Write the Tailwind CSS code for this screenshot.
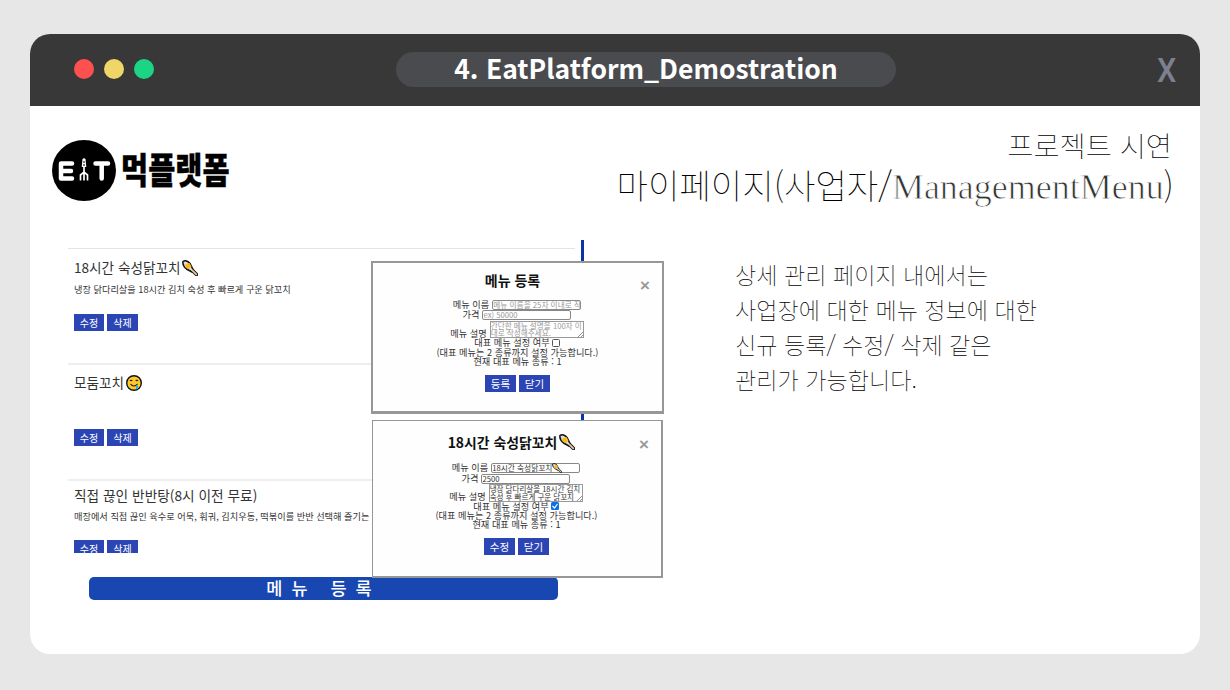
<!DOCTYPE html>
<html lang="ko">
<head>
<meta charset="utf-8">
<title>EatPlatform</title>
<script src="https://cdn.jsdelivr.net/npm/@tailwindcss/browser@4"></script>
</head>
<body class="w-[1230px] h-[690px] overflow-hidden bg-[#e7e7e7] px-[30px] pt-[34px] font-['Noto_Sans_CJK_KR',sans-serif] whitespace-nowrap">
<svg class="hidden">
  <symbol id="skewer" viewBox="0 0 16 16"><path d="M10 10l4.500 4.500" stroke="#111" stroke-width="3.600" stroke-linecap="round"/><path d="M1 1.500C3 0 6 1 8 3.500l3.500 7L10 12 4.500 9C2 7 .5 4 1 1.500z" fill="#d9dcd8" stroke="#111" stroke-width="1.500"/><path d="M3.500 4.500l4-1.500 2 3.500-3 2.500-3-1.500z" fill="#fdb913"/><path d="M10.300 10.300l4 4" stroke="#f3c9a0" stroke-width="1.700" stroke-linecap="round"/></symbol>
</svg>
<main class="w-[1170px] h-[620px] rounded-[20px] overflow-hidden bg-white flex flex-col">
  <header class="h-[72px] shrink-0 bg-[#383838] flex items-center pl-11 pr-[23px]">
    <div class="flex gap-[10px] w-[322px] -mt-0.5">
      <i class="size-5 rounded-full bg-[#ff5050]"></i><i class="size-5 rounded-full bg-[#f0d567]"></i><i class="size-5 rounded-full bg-[#1bd584]"></i>
    </div>
    <h1 class="w-[500px] h-[35px] -mt-0.5 rounded-full bg-[#4a4b4f] text-white text-[26.500px] leading-[31px] font-bold text-center">4. EatPlatform_Demostration</h1>
    <span class="ml-auto text-[#7d8090] font-['Roboto'] font-medium text-[34px] leading-none scale-x-90">X</span>
  </header>
  <div class="flex flex-1">
    <section class="w-[656px] shrink-0 pt-[34px] pl-[22px]">
      <div class="flex h-[61px] items-center">
        <svg class="w-16 h-[61px]" viewBox="0 0 64 61"><ellipse cx="32" cy="30.500" rx="32" ry="30.500"/><g fill="none" stroke="#fff" stroke-width="4.500" stroke-linejoin="round" stroke-linecap="round"><path d="M20 23.500H9V38.500H20M9 31H19M43.500 23.500H56M49.700 23.500V38.500"/></g><path d="M30.500 19q1.500-1.500 3 0l.8 8h-4.600z" fill="#fff"/><path d="M32 27v13.500M28.500 40.500V35l3.500-3 3.500 3v5.500" fill="none" stroke="#fff" stroke-width="1.700"/><path d="M31 22h2M31 25h2" stroke="#000"/></svg>
        <span class="ml-[5px] -mt-1 text-[29.500px] leading-none font-black scale-y-[1.22] [-webkit-text-stroke:0.3px_black]">먹플랫폼</span>
      </div>
      <div class="relative w-[620px] h-[365px] mt-[39px]">
        <div class="absolute left-[529px] top-0 w-[3px] h-[200px] bg-[#0b34ab]"></div>
        <div class="ml-4 pt-2 h-[313px] w-[507px] overflow-hidden text-[#333]">
          <article class="h-[115px] border-t border-[#e4e4e4] pl-1.5 pt-[8px]">
            <h2 class="flex items-center h-5 text-[13.600px]">18시간 숙성닭꼬치<svg class="size-4 ml-0.5 mt-0.5"><use href="#skewer"/></svg></h2>
            <p class="h-[14px] mt-[5px] text-[9.200px] leading-[14px]">냉장 닭다리살을 18시간 김치 숙성 후 빠르게 구운 닭꼬치</p>
            <div class="mt-[18px] flex gap-[3px] text-white text-[10px] leading-[17px] text-center"><span class="w-[30px] bg-[#2c45b5]">수정</span><span class="w-[31px] bg-[#2c45b5]">삭제</span></div>
          </article>
          <article class="h-[116px] border-t-2 border-[#eee] pl-1.5 pt-[7px]">
            <h2 class="flex items-center h-5 text-[13.600px]">모둠꼬치<svg class="size-4 ml-0.5 mt-0.5" viewBox="0 0 16 16"><circle cx="8" cy="8" r="7.300" fill="#fdc92f" stroke="#111" stroke-width="1.400"/><path d="M4 6q1-1.500 2.200 0M9.800 6q1-1.500 2.200 0M4.500 9q3.500 4 7 0" fill="none" stroke="#111" stroke-width="1.100"/><path d="M10 10.500h2v3.500h-2z" fill="#20b7dd"/></svg></h2>
            <div class="mt-[37px] flex gap-[3px] text-white text-[10px] leading-[17px] text-center"><span class="w-[30px] bg-[#2c45b5]">수정</span><span class="w-[31px] bg-[#2c45b5]">삭제</span></div>
          </article>
          <article class="h-[115px] border-t-2 border-[#eee] pl-1.5 pt-[4px]">
            <h2 class="flex items-center h-5 text-[13.700px]">직접 끊인 반반탕(8시 이전 무료)</h2>
            <p class="h-[14px] mt-[4px] text-[9.200px] leading-[14px]">매장에서 직접 끊인 육수로 어묵, 훠궈, 김치우동, 떡볶이를 반반 선택해 즐기는</p>
            <div class="mt-[17px] flex gap-[3px] text-white text-[10px] leading-[17px] text-center"><span class="w-[30px] bg-[#2c45b5]">수정</span><span class="w-[31px] bg-[#2c45b5]">삭제</span></div>
          </article>
        </div>
        <div class="mt-6 ml-[37px] w-[469px] h-[23px] rounded-[5px] bg-[#1947b2] text-white text-[17.500px] leading-[22px] font-medium text-center tracking-[9px]">메뉴 등록</div>

        <div class="absolute left-[319px] top-[21px] w-[293px] h-[153px] border-2 border-b-3 border-[#979797] bg-[#fefefe] text-[9.200px] leading-[9.500px] text-[#333]">
          <b class="absolute right-[12px] top-[14px] text-[#999] text-[17px] leading-[17px] font-['Liberation_Sans']">×</b>
          <div class="w-[283px] pt-[7px] flex flex-col items-center">
            <h3 class="text-[14px] leading-5 font-bold text-[#111] -ml-1">메뉴 등록</h3>
            <div class="mt-[9.500px] h-[10.500px] flex gap-[3px] pl-[5px]">메뉴 이름<span class="w-[89px] h-[10px] rounded-xs border border-[#888] bg-white overflow-hidden text-[#999] text-[7.700px] leading-[8px]">메뉴 이름을 25자 이내로 작</span></div>
            <div class="h-[10.500px] flex gap-[3px] pl-[5px]">가격<span class="w-[89px] h-[10px] rounded-xs border border-[#888] bg-white text-[#999] text-[7.700px] leading-[8px]">ex) 50000</span></div>
            <div class="h-[17.500px] flex items-end gap-[3px] pl-[5px]">메뉴 설명<span class="relative w-[94px] h-[17.500px] border border-[#999] bg-white text-[#999] text-[7.600px] leading-[7.800px]">간단한 메뉴 설명을 100자 이<br>내로 작성해주세요.<svg class="absolute right-0 bottom-0 size-[5px]" stroke="#666" stroke-width=".7"><path d="M0 5L5 0M3 5l2-2"/></svg></span></div>
            <div class="h-[9.500px] flex items-center gap-0.5 pl-[5px]">대표 메뉴 설정 여부<i class="size-2 rounded-[1.500px] border border-[#555] bg-white"></i></div>
            <div class="h-[9.300px] pl-1.5">(대표 메뉴는 2 종류까지 설정 가능합니다.)</div>
            <div class="h-[9.500px] pl-1.5">현재 대표 메뉴 종류 : 1</div>
            <div class="mt-[8.500px] flex gap-[3px] text-white text-[10.500px] leading-[17px] text-center pl-1.5"><span class="w-[31px] bg-[#2c45b5]">등록</span><span class="w-[31px] bg-[#2c45b5]">닫기</span></div>
          </div>
        </div>

        <div class="absolute left-[320px] top-[180px] w-[291px] h-[158px] border-t border-l border-r-2 border-b-2 border-[#979797] bg-[#fefefe] text-[9.200px] leading-[9.500px] text-[#333]">
          <b class="absolute right-[12px] top-[15px] text-[#999] text-[17px] leading-[17px] font-['Liberation_Sans']">×</b>
          <div class="w-[281px] pt-[11px] flex flex-col items-center">
            <h3 class="text-[13.900px] leading-5 font-bold text-[#111] flex items-center -ml-1">18시간 숙성닭꼬치<svg class="size-4 ml-0.5"><use href="#skewer"/></svg></h3>
            <div class="mt-[11px] h-[10.500px] flex gap-[3px] pl-[5px]">메뉴 이름<span class="w-[89px] h-[10px] rounded-xs border border-[#888] bg-white flex text-[#333] text-[7.700px] leading-[8px]">18시간 숙성닭꼬치<svg class="size-2.5 -mt-px"><use href="#skewer"/></svg></span></div>
            <div class="h-[10.500px] flex gap-[3px] pl-[5px]">가격<span class="w-[89px] h-[10px] rounded-xs border border-[#888] bg-white text-[#333] text-[7.700px] leading-[8px]">2500</span></div>
            <div class="h-[17.500px] flex items-end gap-[3px] pl-[5px]">메뉴 설명<span class="relative w-[94px] h-[17.500px] border border-[#999] bg-white text-[#333] text-[7.500px] leading-[7.800px]">냉장 닭다리살을 18시간 김치<br>숙성 후 빠르게 구운 닭꼬치<svg class="absolute right-0 bottom-0 size-[5px]" stroke="#666" stroke-width=".7"><path d="M0 5L5 0M3 5l2-2"/></svg></span></div>
            <div class="h-[9.500px] flex items-center gap-0.5 pl-[5px]">대표 메뉴 설정 여부<svg class="size-2" viewBox="0 0 8 8"><rect width="8" height="8" rx="1.500" fill="#0b70e8"/><path d="M1.500 4l2 2 3-4" fill="none" stroke="#fff" stroke-width="1.200"/></svg></div>
            <div class="h-[9.300px] pl-1.5">(대표 메뉴는 2 종류까지 설정 가능합니다.)</div>
            <div class="h-[9.500px] pl-1.5">현재 대표 메뉴 종류 : 1</div>
            <div class="mt-[8.500px] flex gap-[3px] text-white text-[10.500px] leading-[17px] text-center pl-1.5"><span class="w-[31px] bg-[#2c45b5]">수정</span><span class="w-[31px] bg-[#2c45b5]">닫기</span></div>
          </div>
        </div>
      </div>
    </section>
    <section class="flex-1 min-w-0 pr-[26px] pt-[20px] font-thin text-black">
      <h2 class="flex flex-col items-end"><span class="text-[28.400px] leading-[38px] mr-0.5">프로젝트 시연</span><span class="text-[34.200px] leading-[40px]">마이페이지(사업자/<span class="font-['Liberation_Serif',serif] text-[36px] text-[#333] [-webkit-text-stroke:0.8px_white]">ManagementMenu</span>)</span></h2>
      <p class="pl-[49px] mt-[50px] text-[23.100px] leading-[35px]">상세 관리 페이지 내에서는<br>사업장에 대한 메뉴 정보에 대한<br>신규 등록/ 수정/ 삭제 같은<br>관리가 가능합니다.</p>
    </section>
  </div>
</main>
</body>
</html>
